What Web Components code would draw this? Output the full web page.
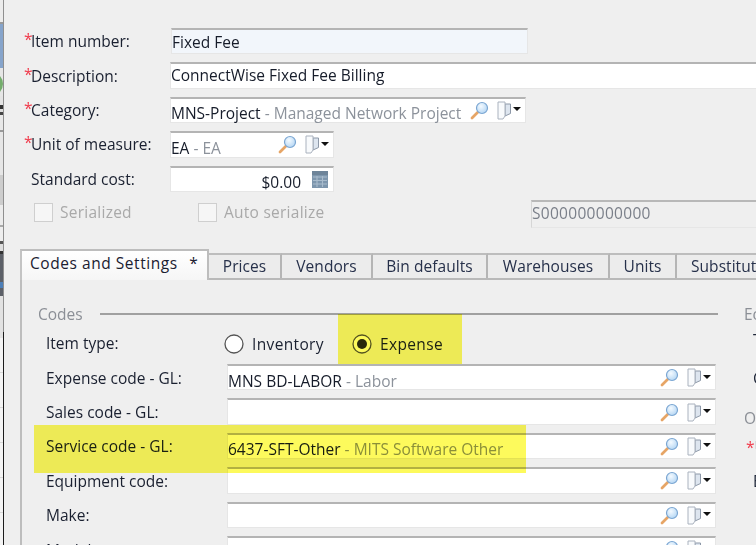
<!DOCTYPE html>
<html lang="en"><head><meta charset="utf-8"><title>Item</title>
<style>html,body{margin:0;padding:0;background:#efefef;overflow:hidden}</style></head>
<body>
<erp-app>
  <erp-rail slot="rail"></erp-rail>
  <erp-row label="Item number:" req><erp-field w="357" ml="1" tint value="Fixed Fee"></erp-field></erp-row>
  <erp-row label="Description:" req><erp-field w="590" value="ConnectWise Fixed Fee Billing" up></erp-field></erp-row>
  <erp-row label="Category:" req><erp-field w="356" value="MNS-Project" desc="Managed Network Project" lookup></erp-field></erp-row>
  <erp-row label="Unit of measure:" req><erp-field w="164" value="EA" desc="EA" lookup></erp-field></erp-row>
  <erp-row label="Standard cost:"><erp-field w="164" value="$0.00" right calendar></erp-field></erp-row>
  <erp-flags></erp-flags>
  <erp-tabs slot="tabs"></erp-tabs>
  <erp-codes slot="panel"></erp-codes>
  <erp-mark slot="marks" style="left:338px;top:314px;width:124px;height:50px"></erp-mark>
  <erp-mark slot="marks" style="left:34px;top:425px;width:492px;height:48px"></erp-mark>
</erp-app>
<script>
const FONT = '"Open Sans","Noto Sans","Liberation Sans",sans-serif';
function shadow(el, html){ el.attachShadow({mode:'open'}).innerHTML = html; }

const LENS = `<svg width="19" height="19" viewBox="0 0 19 19"><defs><radialGradient id="l" cx=".4" cy=".35" r=".8"><stop offset="0" stop-color="#f4faff"/><stop offset="1" stop-color="#a9d0f2"/></radialGradient></defs><path d="M8 11 2 17" stroke="#e6a566" stroke-width="2.800" stroke-linecap="round"/><circle cx="12" cy="7" r="5.500" fill="url(#l)" stroke="#7ba6d2" stroke-width="1.200"/></svg>`;
const FLAG = `<svg width="15" height="19" viewBox="0 0 15 19"><path d="M13.500 3v9.500L8 15V3z" fill="#dde5ef" stroke="#8d98a8"/><path d="M1 1h7v14l-2 3H1z" fill="#f8fafc" stroke="#aab2be"/></svg>`;
const CARET = `<svg width="8" height="4" viewBox="0 0 8 4"><path d="M0 0h8L4 4z" fill="#111"/></svg>`;
const CAL = `<svg width="16" height="17" viewBox="0 0 16 17"><rect width="16" height="17" fill="#7d96ad"/><rect y="0" width="16" height="4" fill="#6d8499"/><path d="M1 6h14M1 9.500h14M1 13h14M5 5v11M10.500 5v11" stroke="#a9bccd" stroke-width="1.100"/></svg>`;

customElements.define('erp-app', class extends HTMLElement{ constructor(){ super(); shadow(this, `<style>
:host{display:block;position:relative;width:756px;height:545px;overflow:hidden;background:#efefef;font:15.5px/18px ${FONT};color:#1a2030;filter:blur(.45px)}
.wrap{display:flex;height:545px}
.main{flex:1;min-width:0;overflow:hidden}
.form{display:flex;flex-direction:column;gap:8px;padding:28px 0 0 20px}
.tabsec{padding:21px 0 0 16px}
</style><div class="wrap"><slot name="rail"></slot><div class="main"><div class="form"><slot></slot></div><div class="tabsec"><slot name="tabs"></slot><slot name="panel"></slot></div></div></div><slot name="marks"></slot>`);} });

customElements.define('erp-rail', class extends HTMLElement{ constructor(){ super();
 const seg = [[22,'#ececec'],[2,'#9a9a9a'],[44,'#86a4cb'],[4,'#e6e6e6'],[24,'g'],[9,'#e4e4e4'],[4,'#333'],[3,'#ddd'],[3,'#444'],[15,'#e8e8e8'],[2,'#999'],[43,'#e6e6e6'],[30,'#cdcdcd'],[20,'#ececec'],[2,'#aaa'],[14,'#eee'],[3,'#555'],[7,'#ddd'],[3,'#333'],[28,'#5c6068'],[6,'#4d7fb8'],[8,'#5c6068'],[42,'#e2e2e2']];
 let h=''; for(const [n,c] of seg){ h += c==='g' ? `<i style="height:${n}px;background:#e6e6e6"><b></b></i>` : `<i style="height:${n}px;background:${c}"></i>`; }
 shadow(this, `<style>
:host{display:block;flex:0 0 3px;width:3px;height:545px;border-right:1px solid #8f8f8f;position:relative}
i{display:block;overflow:hidden;position:relative}
b{display:block;width:24px;height:24px;border-radius:50%;background:#74ad6c;border:0;margin-left:-21px}
.low{height:213px;background:repeating-linear-gradient(#f4f4f4 0 34px,#d8d8d8 34px 35px)}
.edge{position:absolute;right:-1px;top:332px;bottom:0;width:1px;background:#1c1c1c}
</style>${h}<div class="low"></div><div class="edge"></div>`);} });

customElements.define('erp-row', class extends HTMLElement{ constructor(){ super();
 const req=this.hasAttribute('req');
 shadow(this, `<style>
:host{display:grid;grid-template-columns:146px 1fr;height:26.4px;align-items:center}
.l{white-space:nowrap;padding-left:7px;position:relative}
.s{position:absolute;left:0;top:-2px;color:#f0394a}
</style><div class="l">${req?'<span class="s">*</span>':''}${this.getAttribute('label')}</div><div><slot></slot></div>`);} });

customElements.define('erp-field', class extends HTMLElement{ constructor(){ super();
 const a=n=>this.getAttribute(n), h=n=>this.hasAttribute(n);
 const val=a('value')||'', desc=a('desc');
 const low = h('lookup')||h('calendar');
 const icons = h('lookup') ? `<span class="ic">${LENS}<span class="fl">${FLAG}${CARET}</span></span>` : h('calendar') ? `<span class="ic cal">${CAL}</span>` : '';
 shadow(this, `<style>
:host{display:block;box-sizing:border-box;height:26.4px;width:${a('w')||489}px;margin-left:${a('ml')||0}px;background:${h('tint')?'#f2f6fb':'#fff'};border:1px solid #e6e6e6;border-top:2px solid #b4b4b4;color:#161c2a}
.in{display:flex;align-items:center;height:100%;padding-left:0;padding-right:4px}
.t{flex:1;min-width:0;white-space:nowrap;position:relative;top:${low?3:(h('up')?-1:0)}px;${h('right')?'text-align:right;padding-right:5px;':''}}
.d{color:#8c929b}
.ic{display:flex;align-items:center;flex:none}
.fl{display:flex;align-items:center;gap:1px;margin-left:8px}
.fl svg:last-child{margin-top:-2px}
.cal{margin-left:6px;margin-right:1px}
</style><div class="in"><span class="t">${val}${desc?`<span class="d"> - ${desc}</span>`:''}</span>${icons}</div>`);} });

customElements.define('erp-check', class extends HTMLElement{ constructor(){ super(); shadow(this, `<style>
:host{display:flex;align-items:center;gap:7px;color:#a9a9a9;white-space:nowrap;letter-spacing:.25px}
i{display:block;box-sizing:border-box;width:19px;height:19px;background:#f6f6f6;border:1px solid #cfcfcf}
</style><i></i><slot></slot>`);} });

customElements.define('erp-flags', class extends HTMLElement{ constructor(){ super(); shadow(this, `<style>
:host{display:flex;height:28px;align-items:flex-start;margin-left:10px;overflow:visible}
.c{flex:0 0 164px;padding-top:3px}.d{flex:0 0 333px;padding-top:3px}
.b{flex:none;box-sizing:border-box;width:240px;height:28px;border-top:2px solid #b8b8b8;border-left:1px solid #d6d6d6;border-bottom:1px solid #e6e6e6;padding:2px 0 0 0;color:#7a7f89;letter-spacing:.3px}
</style><div class="c"><erp-check>Serialized</erp-check></div><div class="d"><erp-check>Auto serialize</erp-check></div><div class="b">S000000000000</div>`);} });

customElements.define('erp-tabs', class extends HTMLElement{ constructor(){ super();
 const t=[['Prices',73],['Vendors',91],['Bin defaults',115],['Warehouses',122],['Units',67]];
 shadow(this, `<style>
:host{display:flex;align-items:flex-end;height:31px;width:780px;position:relative}
:host::after{content:"";position:absolute;left:0;right:0;bottom:0;height:2px;background:#b9b9b9}
.a{box-sizing:border-box;flex:0 0 189px;height:31px;background:linear-gradient(#fff,#f6f6f6);border:2px solid #bdbdbd;border-bottom:0;border-left-color:#c4c4c4;padding:3px 0 0 8px;position:relative;z-index:1;white-space:nowrap;letter-spacing:.55px}
.a span{margin-left:7px}
.t{box-sizing:border-box;height:26px;background:#ececec;border-top:2px solid #bdbdbd;border-right:2px solid #b5b5b5;text-align:center;white-space:nowrap;padding-top:2px;color:#26304a;margin-bottom:1px;letter-spacing:.05px}
.t.l{text-align:left;padding-left:14px;flex:1;border-right:0}
</style><div class="a">Codes and Settings <span>*</span></div>${t.map(([n,w])=>`<div class="t" style="flex:0 0 ${w}px">${n}</div>`).join('')}<div class="t l">Substitut</div>`);} });

customElements.define('erp-radio', class extends HTMLElement{ constructor(){ super(); const on=this.hasAttribute('on'); shadow(this, `<style>
:host{display:inline-flex;align-items:center;gap:8px;letter-spacing:.35px}
svg{flex:none}
</style><svg width="20" height="20" viewBox="0 0 20 20"><circle cx="10" cy="10" r="9" fill="#fff" stroke="#555" stroke-width="1.300"/>${on?'<circle cx="10" cy="10" r="5" fill="#2a2a20"/>':''}</svg><slot></slot>`);} });

customElements.define('erp-coderow', class extends HTMLElement{ constructor(){ super(); shadow(this, `<style>
:host{display:grid;flex:none;grid-template-columns:181px 1fr;height:26.4px;align-items:center;padding-left:8px}
.l{white-space:nowrap;position:relative;top:.5px}
</style><div class="l">${this.getAttribute('label')}</div><div><slot></slot></div>`);} });

customElements.define('erp-codes', class extends HTMLElement{ constructor(){ super();
 const rows=[['Expense code - GL:','MNS BD-LABOR','Labor'],['Sales code - GL:'],['Service code - GL:','6437-SFT-Other','MITS Software Other'],['Equipment code:'],['Make:'],['Model:']];
 shadow(this, `<style>
:host{display:flex;box-sizing:border-box;width:740px;height:265px;border-left:2px solid #bdbdbd;padding:25px 0 0 16px;gap:26px;overflow:hidden}
.c{flex:0 0 680px;display:flex;flex-direction:column;gap:8px}
.leg{display:flex;flex:none;align-items:center;height:18px;color:#8b8f96;gap:17px;margin-bottom:-1.4px}
.leg::after{content:"";flex:1;height:2px;background:#a0a0a0}
.radios{display:flex;align-items:center;gap:0;margin-left:-3px;position:relative;top:1px}
.radios erp-radio:first-child{width:128px}
.side{color:#20283a;white-space:nowrap;width:40px;flex:none}
.side div{height:18px}
.head{color:#8b8f96}.ind{padding-left:9px}.s{color:#f0394a}
</style><div class="c"><div class="leg">Codes</div>
<erp-coderow label="Item type:"><div class="radios"><erp-radio>Inventory</erp-radio><erp-radio on>Expense</erp-radio></div></erp-coderow>
${rows.map(r=>`<erp-coderow label="${r[0]}"><erp-field w="489" lookup value="${r[1]||''}" ${r[2]?`desc="${r[2]}"`:''}></erp-field></erp-coderow>`).join('')}
</div><div class="side"><div class="head">Ec</div><div class="ind" style="margin-top:8px">T</div><div class="ind" style="margin-top:20px">C</div><div class="head" style="margin-top:22px">O</div><div style="margin-top:11px;padding-left:2px"><span class="s">*</span>U</div><div class="ind" style="margin-top:16px">E</div></div>`);} });

customElements.define('erp-mark', class extends HTMLElement{ constructor(){ super(); shadow(this, `<style>
:host{display:block;position:absolute;background:#fdfa5c;mix-blend-mode:multiply}
</style>`);} });
</script>
</body></html>
